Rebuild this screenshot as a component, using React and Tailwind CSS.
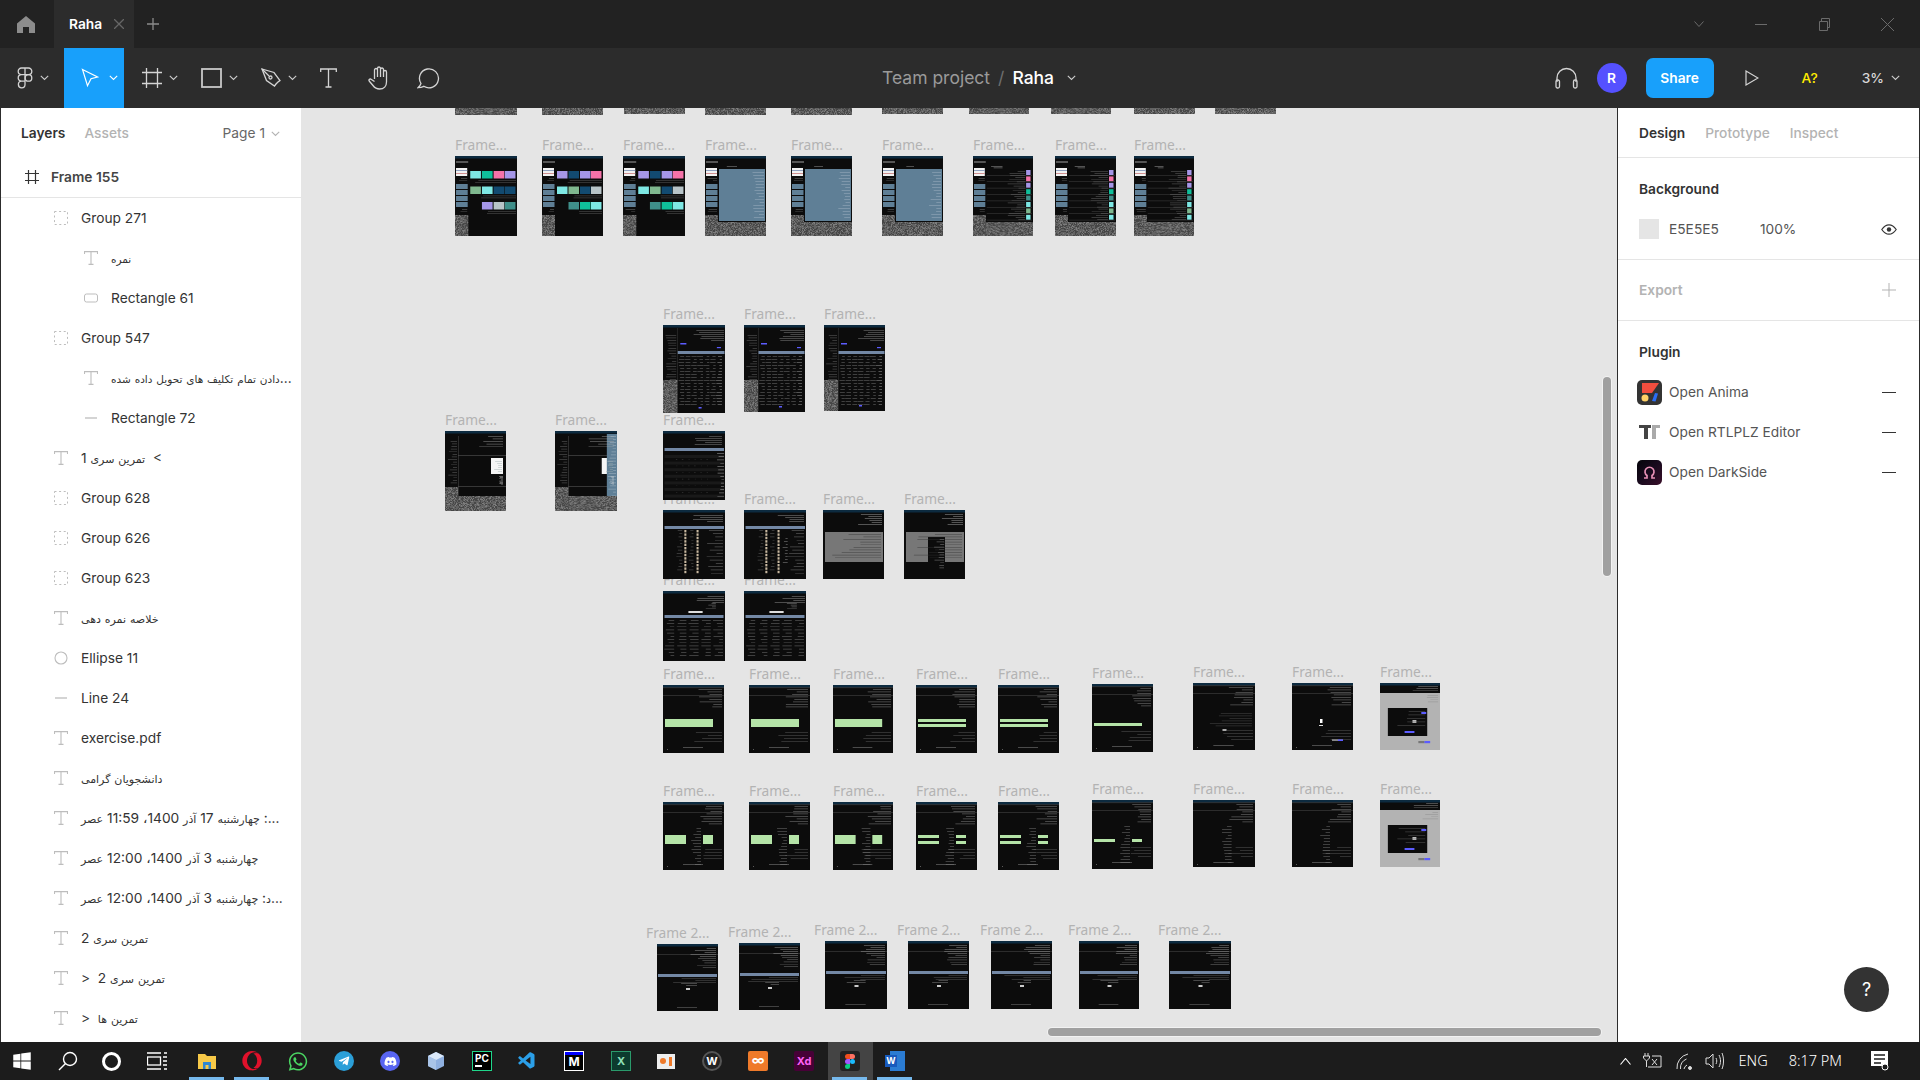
import React from 'react';
import { FaWindows, FaOpera, FaWhatsapp, FaTelegramPlane, FaDiscord } from 'react-icons/fa';
import { VscVscode } from 'react-icons/vsc';

// seeded random so the thumbnails stay the same between renders
function rng(seed) {
  let s = seed * 9301 + 49297;
  return () => {
    s = (s * 9301 + 49297) % 233280;
    return s / 233280;
  };
}

function noisePaths(x, y, w, h, seed) {
  const r = rng(seed);
  let dark = '';
  let light = '';
  for (let j = 0; j < h; j++) {
    for (let i = 0; i < w; i++) {
      const v = r();
      if (v < 0.36) dark += `M${x + i} ${y + j}h1v1h-1z`;
      else if (v > 0.85) light += `M${x + i} ${y + j}h1v1h-1z`;
    }
  }
  return [
    { d: `M${x} ${y}h${w}v${h}h-${w}z`, fill: '#636363' },
    { d: dark, fill: '#474747' },
    { d: light, fill: '#7d7d7d' },
  ];
}

// fake tiny text, right aligned
function greek(seed, right, y, maxW, rows, step, fill = '#8a8a8a') {
  const r = rng(seed);
  let d = '';
  for (let j = 0; j < rows; j++) {
    const w = maxW * (0.35 + r() * 0.65);
    d += `M${(right - w).toFixed(1)} ${(y + j * step).toFixed(1)}h${w.toFixed(1)}v0.7h-${w.toFixed(1)}z`;
  }
  return { d, fill, opacity: 0.55 };
}

const T = '#7ee8e4';
const G = '#0fbf9a';
const P = '#f572a8';
const V = '#a596e8';
const O = '#7fb88f';
const N = '#124a70';
const S = '#b8c4c8';
const M = '#3f8f8a';
const BLUE = '#5f7f96';
const BAND = '#7388a5';
const GREEN = '#b5e4a8';
const PURPLE = '#5c5cff';

const CARD_SETS = {
  cards1: [[T, G, P, V], [O, T, N, N], [null, V, S, M]],
  cards2: [[V, N, V, P], [T, O, N, S], [null, M, G, T]],
};

function sidebar(rects, paths, h, seed) {
  rects.push([1, 12, 11, 8, '#f2f2f2'], [1, 14, 11, 1, '#8fa0c0'], [1, 17, 11, 1, '#d09090']);
  [28, 34, 40, 46].forEach((y) => rects.push([1, y, 11.5, 5, BLUE]));
  paths.push(greek(seed + 1, 12, 22, 10, 2, 2.4), greek(seed + 2, 12, 53, 10, 2, 2.4));
}

function buildThumb(kind, h, seed) {
  const rects = [[0, 0, 61, h, '#0c0c0c']];
  let paths = [];

  if (kind === 'strip') {
    return { rects: [], paths: noisePaths(0, 0, 61, h, seed) };
  }

  if (CARD_SETS[kind]) {
    paths.push(...noisePaths(0, 59, 13, h - 59, seed));
    sidebar(rects, paths, h, seed);
    const xs = [15, 26.5, 38, 49];
    CARD_SETS[kind].forEach((row, j) => {
      row.forEach((c, i) => {
        if (c) rects.push([xs[i], 15 + j * 15.5, 10.5, 7.5, c]);
      });
      paths.push(greek(seed + j + 5, 60, 24 + j * 15.5, 44, 2, 2, '#6a6a6a'));
    });
    rects.push([1, 5, 12, 2, '#555']);
  } else if (kind === 'panel' || kind === 'list') {
    paths.push(...noisePaths(0, 59, 13, h - 59, seed), ...noisePaths(13, 66, 48, h - 66, seed + 3));
    sidebar(rects, paths, h, seed);
    rects.push([1, 5, 12, 2, '#555']);
    if (kind === 'panel') {
      rects.push([14, 13, 46, 52, BLUE]);
      paths.push(greek(seed + 7, 59, 16, 12, 16, 3, '#a9bccb'), greek(seed + 8, 32, 10, 12, 1, 1, '#bbb'));
    } else {
      const cols = [V, P, V, G, M, T, O, T];
      cols.forEach((c, j) => {
        rects.push([54, 14 + j * 6.4, 4.5, 5, c]);
        rects.push([14, 19 + j * 6.4, 46, 0.6, '#3a3a3a']);
      });
      paths.push(greek(seed + 9, 53, 15, 18, 24, 2.1, '#777'), greek(seed + 10, 30, 10, 12, 2, 1.5, '#bbb'));
    }
  } else if (kind === 'table') {
    paths.push(...noisePaths(0, 55, 14, h - 55, seed));
    rects.push([14, 3, 0.6, h - 4, '#333'], [14.5, 26, 46, 3, BAND], [17, 18, 6, 1.5, PURPLE], [53, 22, 4, 1.2, PURPLE], [35, h - 6, 3, 1.5, PURPLE]);
    paths.push(greek(seed + 1, 13, 10, 11, 18, 2.6, '#777'), greek(seed + 2, 60, 5, 32, 6, 2, '#999'));
    for (let j = 0; j < 7; j++) {
      paths.push(greek(seed + 10 + j, 58 - j * 6.2, 31, 6, 17, 3, j === 0 ? '#bbb' : '#888'));
    }
  } else if (kind === 'doc' || kind === 'docblue') {
    paths.push(...noisePaths(0, 56, 13, h - 56, seed), ...noisePaths(13, 65, 48, h - 65, seed + 3));
    rects.push([13, 5, 0.6, 60, '#444'], [13, 24, 48, 0.6, '#555'], [13, 55, 48, 0.6, '#555'], [46, 27, 12, 16, '#f5f5f5']);
    paths.push(greek(seed + 1, 12, 10, 10, 17, 2.6, '#777'), greek(seed + 2, 58, 5, 28, 5, 2.6, '#aaa'), greek(seed + 4, 58, 45, 4, 8, 1.2, '#ddd'), greek(seed + 5, 57, 30, 8, 6, 2, '#9aa'));
    if (kind === 'docblue') {
      rects.push([51, 3, 10, 65, BLUE]);
      paths.push(greek(seed + 6, 60, 5, 8, 20, 3.1, '#b5c5d2'));
    }
  } else if (kind === 'wide') {
    rects.push([1.5, 17, 58.5, 3, BAND]);
    for (let j = 0; j < 7; j++) rects.push([1.5, 24 + j * 6.6, 58.5, 3, '#191919']);
    paths.push(greek(seed + 1, 58, 5, 30, 5, 2, '#999'), greek(seed + 2, 60, 22, 7, 14, 3.3, '#ccc'));
    for (let j = 1; j < 7; j++) paths.push(greek(seed + 3 + j, 50 - j * 6, 28, 1.5, 6, 6.6, '#555'));
  } else if (kind === 'image' || kind === 'image2') {
    rects.push([1.5, 16, 58.5, 3, BAND]);
    for (let j = 0; j < 13; j++) {
      rects.push([21, 20 + j * 3.4, 2, 2.4, '#c8b8a0'], [33, 20 + j * 3.4, 2, 2.4, '#c8b8a0']);
    }
    paths.push(greek(seed + 1, 59, 5, 30, 4, 2, '#aaa'), greek(seed + 2, 59, 20, 16, 14, 3.3, '#888'), greek(seed + 3, 19, 20, 6, 13, 3.3, '#777'), greek(seed + 4, 30, 20, 5, 13, 3.3, '#777'));
    if (kind === 'image2') rects.push([38, 26, 5, 30, '#0c0c0c']);
    if (kind === 'image2') paths.push(greek(seed + 5, 43, 28, 5, 9, 3, '#aaa'));
  } else if (kind === 'gray' || kind === 'grayPop') {
    rects.push([2, 22, 58, 30, '#777']);
    paths.push(greek(seed + 1, 59, 4, 28, 6, 2, '#bbb'), greek(seed + 2, 58, 24, 50, 10, 2.6, '#333'));
    if (kind === 'grayPop') {
      rects.push([24, 27, 17, 33, '#0c0c0c']);
      paths.push(greek(seed + 3, 40, 29, 10, 12, 2.6, '#999'));
    }
  } else if (kind === 'summary') {
    rects.push([25, 20, 14, 2, '#ddd'], [1.5, 24, 58, 3, BAND]);
    paths.push(greek(seed + 1, 60, 5, 30, 4, 2, '#aaa'), greek(seed + 2, 52, 12, 10, 4, 1.8, '#999'));
    for (let j = 0; j < 5; j++) paths.push(greek(seed + 3 + j, 59 - j * 12, 29, 10, 12, 3.2, '#888'));
  } else if (kind.startsWith('green') || kind === 'plain' || kind === 'mic' || kind.startsWith('split') || kind === 'plainSplit') {
    const split = kind.startsWith('split') || kind === 'plainSplit';
    paths.push(greek(seed + 1, 59, 4, 24, 8, 2.5, '#999'), greek(seed + 2, 59, 47, 30, 4, 3, '#666'));
    rects.push([0, 2.5, 61, 0.6, '#444'], [0, 10, 61, 0.6, '#444'], [4, 64, 0.8, 0.8, '#888'], [20, 62, 20, 0.6, '#777']);
    if (split) paths.push(greek(seed + 3, 38, 26, 10, 13, 3, '#888'));
    const bars = {
      green1: [[2, 34, 48, 8]],
      green2: [[2, 34, 48, 3], [2, 39, 48, 3]],
      green3: [[2, 39, 48, 3]],
      split1: [[2, 33, 21, 9], [40, 33, 10, 9]],
      split2: [[2, 33, 21, 3], [2, 39, 21, 3], [40, 33, 10, 3], [40, 39, 10, 3]],
      split3: [[2, 39, 21, 3], [40, 39, 10, 3]],
    }[kind];
    (bars || []).forEach((b) => rects.push([...b, GREEN]));
    if (kind === 'mic') {
      rects.push([28, 36, 2.5, 4, '#fff'], [27, 42, 4, 1, '#ddd'], [40, 56, 6, 2, '#888'], [46, 56, 5, 2, PURPLE]);
    }
    if (kind === 'plain') {
      rects.push([29, 46, 4, 2, '#aaa']);
      paths.push(greek(seed + 4, 58, 30, 46, 6, 2.5, '#555'));
    }
  } else if (kind === 'modal') {
    rects.push([0, 10, 61, h - 10, '#b3b3b3'], [8, 25, 40, 28, '#0c0c0c'], [45, 58, 6, 2.2, PURPLE], [39, 58, 6, 2.2, '#777'], [25, 48, 10, 2, PURPLE], [42, 29, 5, 2, PURPLE], [33, 37, 4, 3, '#bbb']);
    paths.push(greek(seed + 1, 59, 3, 26, 3, 2.2, '#aaa'), greek(seed + 2, 59, 12, 16, 4, 2.2, '#888'), greek(seed + 3, 46, 28, 30, 5, 3.5, '#666'));
  } else if (kind === 'band') {
    rects.push([1, 30, 59, 3, BAND], [0, 10, 61, 0.6, '#444'], [29, 44, 4, 2, '#ccc']);
    paths.push(greek(seed + 1, 59, 4, 26, 5, 2, '#aaa'), greek(seed + 2, 59, 14, 20, 5, 2.3, '#888'), greek(seed + 3, 40, 39, 20, 2, 2, '#999'), greek(seed + 4, 59, 34, 50, 3, 2, '#666'));
    rects.push([20, 63, 20, 0.6, '#666']);
  }

  rects.splice(1, 0, [0, 0, 61, 2.5, '#0d2b40']);
  return { rects, paths };
}

function Thumb({ kind, w, h, seed }) {
  const { rects, paths } = buildThumb(kind, h, seed);
  return (
    <svg width={w} height={h} viewBox={`0 0 61 ${h}`} preserveAspectRatio="none" className="relative z-10 block">
      {rects.map((r, i) => (
        <rect key={i} x={r[0]} y={r[1]} width={r[2]} height={r[3]} fill={r[4]} />
      ))}
      {paths.map((p, i) => (
        <path key={i} d={p.d} fill={p.fill} opacity={p.opacity} />
      ))}
    </svg>
  );
}

// x, y, w, h in page pixels
const FRAMES = [
  [455, 100, 62, 15, 'strip'], [542, 100, 61, 15, 'strip'], [624, 100, 61, 14, 'strip'], [705, 100, 61, 15, 'strip'], [791, 100, 61, 15, 'strip'],
  [882, 100, 61, 14, 'strip'], [969, 100, 60, 14, 'strip'], [1051, 100, 60, 14, 'strip'], [1134, 100, 61, 14, 'strip'], [1215, 100, 61, 14, 'strip'],

  [455, 156, 62, 80, 'cards1', 'Frame...'], [542, 156, 61, 80, 'cards2', 'Frame...'], [623, 156, 62, 80, 'cards2', 'Frame...'],
  [705, 156, 61, 80, 'panel', 'Frame...'], [791, 156, 61, 80, 'panel', 'Frame...'], [882, 156, 61, 80, 'panel', 'Frame...'],
  [973, 156, 60, 80, 'list', 'Frame...'], [1055, 156, 61, 80, 'list', 'Frame...'], [1134, 156, 60, 80, 'list', 'Frame...'],

  [663, 325, 62, 88, 'table', 'Frame...'], [744, 325, 61, 87, 'table', 'Frame...'], [824, 325, 61, 86, 'table', 'Frame...'],
  [445, 431, 61, 80, 'doc', 'Frame...'], [555, 431, 62, 80, 'docblue', 'Frame...'],
  [663, 431, 62, 69, 'wide', 'Frame...'],
  [663, 510, 62, 69, 'image', 'Frame...'], [744, 510, 62, 69, 'image2', 'Frame...'], [823, 510, 61, 69, 'gray', 'Frame...'], [904, 510, 61, 69, 'grayPop', 'Frame...'],
  [663, 591, 62, 70, 'summary', 'Frame...'], [744, 591, 62, 70, 'summary', 'Frame...'],

  [663, 685, 61, 68, 'green1', 'Frame...'], [749, 685, 61, 68, 'green1', 'Frame...'], [833, 685, 60, 68, 'green1', 'Frame...'], [916, 685, 61, 68, 'green2', 'Frame...'], [998, 685, 61, 68, 'green2', 'Frame...'],
  [1092, 684, 61, 68, 'green3', 'Frame...'], [1193, 683, 62, 67, 'plain', 'Frame...'], [1292, 683, 61, 67, 'mic', 'Frame...'], [1380, 683, 60, 67, 'modal', 'Frame...'],

  [663, 802, 61, 68, 'split1', 'Frame...'], [749, 802, 61, 68, 'split1', 'Frame...'], [833, 802, 60, 68, 'split1', 'Frame...'], [916, 802, 61, 68, 'split2', 'Frame...'], [998, 802, 61, 68, 'split2', 'Frame...'],
  [1092, 800, 61, 69, 'split3', 'Frame...'], [1193, 800, 62, 67, 'plainSplit', 'Frame...'], [1292, 800, 61, 67, 'plainSplit', 'Frame...'], [1380, 800, 60, 67, 'modal', 'Frame...'],

  [657, 944, 61, 67, 'band', 'Frame 2...'], [739, 943, 61, 67, 'band', 'Frame 2...'], [825, 941, 62, 68, 'band', 'Frame 2...'], [908, 941, 61, 68, 'band', 'Frame 2...'],
  [991, 941, 61, 68, 'band', 'Frame 2...'], [1079, 941, 60, 68, 'band', 'Frame 2...'], [1169, 941, 62, 68, 'band', 'Frame 2...'],
];

function Canvas() {
  return (
    <div className="relative flex-1 overflow-hidden bg-[#e5e5e5]">
      {FRAMES.map(([x, y, w, h, kind, label], i) => (
        <div key={i} className="absolute" style={{ left: x - 301, top: y - 108, width: w }}>
          {label && (
            <span className={`absolute top-[-19px] whitespace-nowrap text-[13.75px] leading-4 text-[#b3b3b3] ${label === 'Frame 2...' ? 'left-[-11px]' : 'left-0'}`}>{label}</span>
          )}
          <Thumb kind={kind} w={w} h={h} seed={i + 3} />
        </div>
      ))}
      {/* canvas scrollbars */}
      <div className="absolute left-[1302px] top-[269px] z-20 h-[199px] w-2 rounded-full bg-[#a0a0a0] ring-1 ring-white/50" />
      <div className="absolute left-[747px] top-[920px] z-20 h-2 w-[553px] rounded-full bg-[#a0a0a0] ring-1 ring-white/50" />
    </div>
  );
}

const Chevron = ({ className = '', color = '#ccc' }) => (
  <svg width="9" height="6" viewBox="0 0 9 6" fill="none" className={className}>
    <path d="M.8.8l3.7 3.7L8.2.8" stroke={color} strokeWidth="1.1" />
  </svg>
);

const iconLine = { fill: 'none', stroke: '#d4d4d4', strokeWidth: 1.3 };

function ToolGroup({ children, chevron, className = '' }) {
  return (
    <div className={`flex items-center ${className}`}>
      {children}
      {chevron && <Chevron className="ml-[7px]" />}
    </div>
  );
}

function Toolbar() {
  return (
    <div className="flex h-[60px] items-center bg-[#2c2c2c] font-['Inter',sans-serif]">
      <div className="flex w-[64px] items-center pl-[17px]">
        <ToolGroup chevron>
          <svg width="16" height="22" viewBox="0 0 16 22" {...iconLine}>
            <path d="M8 1H4.500a3.300 3.300 0 000 6.600H8zM8 1h3.500a3.300 3.300 0 010 6.600H8zM8 7.600H4.500a3.300 3.300 0 000 6.600H8zM8 14.200H4.500A3.300 3.300 0 108 17.500z" />
            <circle cx="11.500" cy="10.900" r="3.300" />
          </svg>
        </ToolGroup>
      </div>
      <div className="flex h-full w-[60px] items-center justify-center gap-[10px] bg-[#18a0fb] pl-[10px]">
        <svg width="18" height="20" viewBox="0 0 18 20" fill="none" stroke="#fff" strokeWidth="1.200">
          <path d="M1.500 1.500l15 7.500-6.500 1.700-3.500 7z" />
        </svg>
        <Chevron color="#fff" />
      </div>
      <ToolGroup chevron className="ml-[18px]">
        <svg width="20" height="20" viewBox="0 0 20 20" {...iconLine}>
          <path d="M4.500 0v20M15.500 0v20M0 4.500h20M0 15.500h20" />
        </svg>
      </ToolGroup>
      <ToolGroup chevron className="ml-[23px]">
        <svg width="21" height="20" viewBox="0 0 21 20" fill="none" stroke="#c8c8c8" strokeWidth="1.800">
          <rect x="1" y="1" width="19" height="18" />
        </svg>
      </ToolGroup>
      <ToolGroup chevron className="ml-[23px]">
        <svg width="20" height="20" viewBox="0 0 20 20" {...iconLine}>
          <path d="M1 1l12 3.500 6 8-2 1.500-2 2-1.500 2-8-5.500z" />
          <path d="M1 1l7 7" />
          <circle cx="9.500" cy="9.500" r="1.500" />
        </svg>
      </ToolGroup>
      <svg width="17" height="20" viewBox="0 0 17 20" {...iconLine} className="ml-[23px]">
        <path d="M.7 4V1h15.600v3M8.500 1v18M5.500 19h6" />
      </svg>
      <svg width="22" height="24" viewBox="0 0 22 24" {...iconLine} className="ml-[31px]">
        <path d="M6.500 13V4a1.500 1.500 0 013 0V2.500a1.500 1.500 0 013 0V3.500a1.500 1.500 0 013 0V6a1.500 1.500 0 013 0v10c0 4-2.500 7-7 7-3.500 0-5-1.500-6.500-3.500L1.200 15c-.7-1 .3-2.500 1.800-1.800l3.500 2.300M9.500 4v7M12.500 3v8M15.500 4v7" />
      </svg>
      <svg width="23" height="22" viewBox="0 0 23 22" {...iconLine} className="ml-[27px]">
        <path d="M4 16.500a9.500 9.500 0 112.800 2.800c-1.800.9-3.700 1.300-5.800 1.400 1.400-1.200 2.500-2.600 3-4.200z" />
      </svg>

      <div className="ml-[442px] flex items-center text-[17.500px]">
        <span className="text-[#9a9a9a]">Team project</span>
        <span className="mx-[8px] text-[#6f6f6f]">/</span>
        <span className="font-medium text-white">Raha</span>
        <Chevron className="ml-[13px]" />
      </div>

      <div className="ml-auto flex items-center pr-[20px]">
        <svg width="23" height="22" viewBox="0 0 23 22" {...iconLine}>
          <path d="M2 15V11a9.500 9.500 0 0119 0v4" />
          <rect x="1" y="13" width="3.500" height="8" rx="1.500" />
          <rect x="18.500" y="13" width="3.500" height="8" rx="1.500" />
        </svg>
        <div className="ml-[19px] flex size-[30px] items-center justify-center rounded-full bg-[#5551ff] text-[13.750px] font-semibold text-white">R</div>
        <div className="ml-[19px] flex h-[40px] w-[68px] items-center justify-center rounded-[7px] bg-[#18a0fb] text-[13.750px] font-semibold text-white">Share</div>
        <svg width="14" height="16" viewBox="0 0 14 16" fill="none" stroke="#d4d4d4" strokeWidth="1.200" className="ml-[31px]">
          <path d="M1 1l12 7-12 7z" />
        </svg>
        <span className="ml-[43px] text-[13.750px] font-medium text-[#ffeb00]">A?</span>
        <span className="ml-[44px] text-[13.750px] font-medium text-[#d8d8d8]">3%</span>
        <Chevron className="ml-[7px]" />
      </div>
    </div>
  );
}

function TitleBar() {
  return (
    <div className="flex h-12 items-center bg-[#222222] font-['Inter',sans-serif]">
      <svg width="18" height="17" viewBox="0 0 18 17" fill="#8c8c8c" className="ml-[17px]">
        <path d="M9 0l9 7.500V17h-6v-6H6v6H0V7.500z" />
      </svg>
      <div className="ml-[19px] flex h-full w-[80px] items-center bg-[#2c2c2c] pl-[15px]">
        <span className="text-[13.750px] font-semibold text-white">Raha</span>
        <svg width="10" height="10" viewBox="0 0 10 10" stroke="#666" strokeWidth="1.300" className="ml-[12px]">
          <path d="M0 0l10 10M10 0L0 10" />
        </svg>
      </div>
      <svg width="12" height="12" viewBox="0 0 12 12" stroke="#8c8c8c" strokeWidth="1.300" className="ml-[13px]">
        <path d="M6 0v12M0 6h12" />
      </svg>
      <div className="ml-auto flex items-center text-[#6b6b6b]">
        <svg width="10" height="6" viewBox="0 0 10 6" fill="none" stroke="currentColor" className="mr-[51px]">
          <path d="M.5.500L5 5.500 9.500.500" />
        </svg>
        <div className="mr-[52px] h-px w-[12px] bg-current" />
        <svg width="11" height="13" viewBox="0 0 11 13" fill="none" stroke="currentColor" className="mr-[51px]">
          <path d="M.5 3.500h8v9h-8zM2.500 3.500v-3h8v9h-2" />
        </svg>
        <svg width="13" height="13" viewBox="0 0 13 13" stroke="currentColor" className="mr-[26px]">
          <path d="M0 0l13 13M13 0L0 13" />
        </svg>
      </div>
    </div>
  );
}

const LAYERS = [
  ['group', 'Group 271', 0],
  ['text', 'نمره', 1],
  ['rect', 'Rectangle 61', 1],
  ['group', 'Group 547', 0],
  ['text', 'دادن تمام تکلیف های تحویل داده شده...', 1],
  ['line', 'Rectangle 72', 1],
  ['text', 'تمرین سری 1  <', 0],
  ['group', 'Group 628', 0],
  ['group', 'Group 626', 0],
  ['group', 'Group 623', 0],
  ['text', 'خلاصه نمره دهی', 0],
  ['ellipse', 'Ellipse 11', 0],
  ['line', 'Line 24', 0],
  ['text', 'exercise.pdf', 0],
  ['text', 'دانشجویان گرامی', 0],
  ['text', 'چهارشنبه 17 آذر 1400، 11:59 عصر\u200E :...', 0],
  ['text', 'چهارشنبه 3 آذر 1400، 12:00 عصر', 0],
  ['text', 'چهارشنبه 3 آذر 1400، 12:00 عصر\u200E :\u200Eد...', 0],
  ['text', 'تمرین سری 2', 0],
  ['text', '>  تمرین سری 2', 0],
  ['text', '>  تمرین ها', 0],
];

function LayerIcon({ type }) {
  if (type === 'group') {
    return (
      <svg width="14" height="14" viewBox="0 0 14 14" stroke="#bdbdbd" fill="none" strokeDasharray="2 2.600">
        <rect x=".5" y=".5" width="13" height="13" />
      </svg>
    );
  }
  if (type === 'text') {
    return (
      <svg width="14" height="14" viewBox="0 0 14 14" stroke="#bdbdbd" fill="none" strokeWidth="1.100">
        <path d="M.5 3V.6h13V3M7 .6v12.800M4.500 13.400h5" />
      </svg>
    );
  }
  if (type === 'rect') {
    return (
      <svg width="14" height="14" viewBox="0 0 14 14" stroke="#bdbdbd" fill="none">
        <rect x=".5" y="3" width="13" height="8" rx="2" />
      </svg>
    );
  }
  if (type === 'line') {
    return (
      <svg width="14" height="14" viewBox="0 0 14 14" stroke="#bdbdbd" fill="none" strokeWidth="1.300">
        <path d="M1 7h12" />
      </svg>
    );
  }
  return (
    <svg width="14" height="14" viewBox="0 0 14 14" stroke="#bdbdbd" fill="none" strokeWidth="1.100">
      <circle cx="7" cy="7" r="6" />
    </svg>
  );
}

// the arabic words render smaller than the latin/digits in the reference
function LayerName({ name, indent }) {
  const parts = name.split(/([\u0621-\u06FF]+)/);
  return (
    <>
      {parts.map((p, i) => (/[\u0621-\u06FF]/.test(p) ? <span key={i} className={indent ? 'text-[10.500px]' : 'text-[11px]'}>{p}</span> : <span key={i}>{p}</span>))}
    </>
  );
}

function LeftPanel() {
  return (
    <div className="flex w-[301px] flex-col overflow-hidden border-l border-[#2c2c2c] bg-white font-['Inter','DejaVu_Sans',sans-serif] text-[13.750px]">
      <div className="flex h-[49px] shrink-0 items-center pl-[20px] pr-[21px] pt-[2px]">
        <span className="font-semibold text-[#333]">Layers</span>
        <span className="ml-[19px] font-medium text-[#b3b3b3]">Assets</span>
        <span className="ml-auto text-[#666]">Page 1</span>
        <Chevron className="ml-[6px]" color="#b3b3b3" />
      </div>
      <div className="flex h-[41px] shrink-0 items-center border-b border-[#e5e5e5] pl-[24px]">
        <svg width="14" height="14" viewBox="0 0 14 14" stroke="#333" fill="none" strokeWidth="1.200">
          <path d="M3.500 0v14M10.500 0v14M0 3.500h14M0 10.500h14" />
        </svg>
        <span className="ml-[12px] font-semibold text-[#444]">Frame 155</span>
      </div>
      {LAYERS.map(([type, name, indent], i) => (
        <div key={i} className={`flex h-10 shrink-0 items-center text-[#333] ${indent ? 'pl-[83px]' : 'pl-[53px]'}`}>
          <LayerIcon type={type} />
          <span className="ml-[13px] whitespace-pre">
            <LayerName name={name} indent={indent} />
          </span>
        </div>
      ))}
    </div>
  );
}

const Minus = () => <div className="ml-auto h-px w-[14px] bg-[#333]" />;

function PluginIcon({ children, className }) {
  return <div className={`flex size-[25px] shrink-0 items-center justify-center overflow-hidden rounded-[5px] ${className}`}>{children}</div>;
}

function RightPanel() {
  return (
    <div className="relative flex w-[303px] flex-col border-x border-[#2c2c2c] bg-white font-['Inter',sans-serif] text-[13.750px]">
      <div className="flex h-[50px] shrink-0 items-center gap-[20px] border-b border-[#e5e5e5] pl-[21px] pt-[2px]">
        <span className="font-semibold text-[#333]">Design</span>
        <span className="font-medium text-[#b3b3b3]">Prototype</span>
        <span className="font-medium text-[#b3b3b3]">Inspect</span>
      </div>
      <div className="h-[102px] shrink-0 border-b border-[#e5e5e5] pl-[21px] pr-[22px]">
        <div className="pt-[21px] font-semibold leading-[20px] text-[#333]">Background</div>
        <div className="mt-[20px] flex items-center">
          <div className="size-[20px] bg-[#e5e5e5]" />
          <span className="ml-[10px] text-[#555]">E5E5E5</span>
          <span className="ml-[41px] text-[#555]">100%</span>
          <svg width="16" height="11" viewBox="0 0 16 11" className="ml-auto" fill="none" stroke="#333" strokeWidth="1.200">
            <path d="M.8 5.500C3 2.300 5.300.8 8 .8s5 1.500 7.200 4.700C13 8.700 10.700 10.200 8 10.200S3 8.700.8 5.500z" />
            <circle cx="8" cy="5.500" r="2.200" fill="#333" stroke="none" />
          </svg>
        </div>
      </div>
      <div className="flex h-[61px] shrink-0 items-center border-b border-[#e5e5e5] pl-[21px] pr-[23px]">
        <span className="font-semibold text-[#b3b3b3]">Export</span>
        <svg width="14" height="14" viewBox="0 0 14 14" stroke="#b3b3b3" className="ml-auto">
          <path d="M7 0v14M0 7h14" />
        </svg>
      </div>
      <div className="pl-[19px] pr-[23px]">
        <div className="pl-[2px] pt-[21px] font-semibold leading-[20px] text-[#333]">Plugin</div>
        <div className="mt-[10px] flex h-10 items-center">
          <PluginIcon className="bg-[#333]">
            <svg width="25" height="25" viewBox="0 0 25 25">
              <path d="M5 3h17l-7 10H5z" fill="#f24e3e" />
              <circle cx="8" cy="18" r="3.500" fill="#ffd166" />
              <path d="M15 21l3-8 3 .5-2.500 8z" fill="#2a6df4" />
            </svg>
          </PluginIcon>
          <span className="ml-[7px] text-[#555]">Open Anima</span>
          <Minus />
        </div>
        <div className="flex h-10 items-center">
          <PluginIcon className="bg-transparent">
            <svg width="22" height="14" viewBox="0 0 22 14">
              <path d="M0 0h12v3H9v11H5V3H0z" fill="#444" />
              <path d="M13 0h8v3h-4v11h-4z" fill="#aaa" />
            </svg>
          </PluginIcon>
          <span className="ml-[7px] text-[#555]">Open RTLPLZ Editor</span>
          <Minus />
        </div>
        <div className="flex h-10 items-center">
          <PluginIcon className="bg-gradient-to-br from-[#05050a] via-[#190a1e] to-[#3a0f2a]">
            <svg width="13" height="13" viewBox="0 0 13 13" fill="none" stroke="#e58fb4" strokeWidth="1.700">
              <path d="M1 12h3V9.500a4.500 4.500 0 115 0V12h3" />
            </svg>
          </PluginIcon>
          <span className="ml-[7px] text-[#555]">Open DarkSide</span>
          <Minus />
        </div>
      </div>
      <div className="absolute left-[226px] top-[859px] flex size-[45px] items-center justify-center rounded-full bg-[#333] text-[18px] text-white">?</div>
    </div>
  );
}

// simple square app tile for the taskbar
function Tile({ className, children }) {
  return <div className={`flex size-[20px] items-center justify-center ${className}`}>{children}</div>;
}

const TASK_ITEMS = [
  { x: 197, active: true, node: (
    <svg width="20" height="20" viewBox="0 0 20 20"><path d="M1 3h7l2 2h9v13H1z" fill="#f7c948" /><rect x="6" y="11" width="8" height="7" fill="#2f86d1" /><rect x="8.500" y="14" width="3" height="4" fill="#f7c948" /></svg>
  ) },
  { x: 242, active: true, node: <FaOpera size={20} color="#e0112b" /> },
  { x: 288, node: <FaWhatsapp size={21} color="#4ad462" /> },
  { x: 334, node: <div className="flex size-[20px] items-center justify-center rounded-full bg-[#2b9fd8]"><FaTelegramPlane size={12} color="#fff" /></div> },
  { x: 380, node: <div className="flex size-[20px] items-center justify-center rounded-full bg-[#5865f2]"><FaDiscord size={13} color="#fff" /></div> },
  { x: 426, node: (
    <svg width="20" height="20" viewBox="0 0 20 20"><path d="M10 1l8 4v10l-8 4-8-4V5z" fill="#8fb0e0" /><path d="M10 1l8 4-8 4-8-4z" fill="#dbe8f8" /><path d="M10 9v10l-8-4V5z" fill="#a9c4e8" /></svg>
  ) },
  { x: 472, node: (
    <div className="relative flex size-[20px] flex-col items-start border border-[#1fd68a] bg-black pl-[2px] pt-[1px] text-[10px] font-bold leading-[11px] text-white">PC<span className="mt-[1px] h-[1.500px] w-[7px] bg-white" /></div>
  ) },
  { x: 517, node: <VscVscode size={20} color="#2b9fe8" /> },
  { x: 564, node: (
    <div className="flex h-[20px] w-[20px] flex-col border border-white bg-black"><span className="h-[3px] bg-[#0000ff]" /><span className="text-center text-[12px] font-bold leading-[14px] text-white">M</span></div>
  ) },
  { x: 611, node: <Tile className="border border-[#2a9a6b] bg-[#0c3b2e] text-[11px] font-bold text-[#8fe0b8]">X</Tile> },
  { x: 656, node: (
    <svg width="20" height="20" viewBox="0 0 20 20"><path d="M1 3h18v15H1z" fill="#eee" /><circle cx="7" cy="10" r="3" fill="#ef7a2a" /><rect x="13" y="6" width="3" height="9" fill="#ef7a2a" /></svg>
  ) },
  { x: 702, node: <div className="flex size-[20px] items-center justify-center rounded-full border-2 border-[#555] bg-[#222] text-[11px] font-bold text-white">W</div> },
  { x: 748, node: <Tile className="rounded-[2px] bg-[#ef7a2a] text-[13px] font-bold text-white">&#8734;</Tile> },
  { x: 794, node: <Tile className="rounded-[2px] bg-[#470137] text-[11px] font-bold text-[#ff61f6]">Xd</Tile> },
  { x: 840, active: true, figma: true, node: (
    <div className="flex size-[20px] items-center justify-center rounded-[3px] bg-[#222]">
      <svg width="10" height="15" viewBox="0 0 10 15"><path d="M5 0H2.500a2.500 2.500 0 000 5H5z" fill="#f24e1e" /><path d="M5 0h2.500a2.500 2.500 0 010 5H5z" fill="#ff7262" /><path d="M5 5H2.500a2.500 2.500 0 000 5H5z" fill="#a259ff" /><circle cx="7.500" cy="7.500" r="2.500" fill="#1abcfe" /><path d="M5 10H2.500A2.500 2.500 0 105 12.500z" fill="#0acf83" /></svg>
    </div>
  ) },
  { x: 885, active: true, node: (
    <div className="relative size-[20px]"><div className="absolute right-0 top-0 h-full w-[15px] bg-[#2b7cd3]" /><div className="absolute left-0 top-[4px] flex h-[12px] w-[12px] items-center justify-center bg-[#185abd] text-[9px] font-bold text-white">W</div></div>
  ) },
];

function Taskbar() {
  return (
    <div className="relative flex h-[38px] shrink-0 items-center bg-[#1c1c1c] font-['Inter',sans-serif] text-white">
      <FaWindows size={20} color="#fff" className="ml-[12px]" />
      <svg width="20" height="20" viewBox="0 0 20 20" fill="none" stroke="#fff" strokeWidth="1.400" className="ml-[26px]">
        <circle cx="12" cy="8" r="6.500" /><path d="M7.500 12.500L1 19" />
      </svg>
      <div className="ml-[24px] size-[19px] rounded-full border-[3px] border-white" />
      <svg width="20" height="20" viewBox="0 0 20 20" fill="none" stroke="#fff" strokeWidth="1.300" className="ml-[26px]">
        <path d="M0 2h14M17 2h3M0 18h14M17 18h3" /><rect x=".5" y="6" width="13" height="8" /><path d="M16 6h4M16 10h4M16 14h4" />
      </svg>
      {TASK_ITEMS.map((item) => (
        <div key={item.x} className="absolute top-0 h-full" style={{ left: item.x }}>
          {item.figma && <div className="absolute left-[-12px] top-0 h-full w-[45px] bg-[#444]" />}
          {item.active && <div className="absolute bottom-0 left-[-8px] h-[3px] w-[35px] bg-[#76b9ed]" />}
          <div className="relative mt-[9px] flex size-[20px] items-center justify-center">{item.node}</div>
        </div>
      ))}
      <div className="ml-auto flex items-center pr-[30px] text-[14.500px]">
        <svg width="11" height="7" viewBox="0 0 11 7" fill="none" stroke="#fff" strokeWidth="1.100">
          <path d="M.5 6.500l5-6 5 6" />
        </svg>
        <svg width="20" height="16" viewBox="0 0 20 16" fill="none" stroke="#ddd" className="ml-[11px]">
          <path d="M3 0v3M6 0v3M1.500 3h6v2l-3 3-3-3zM4.500 8v6M6 14h13V3h-9" /><path d="M10 6l5 6M15 6l-5 6" />
        </svg>
        <svg width="17" height="17" viewBox="0 0 17 17" fill="none" stroke="#ddd" className="ml-[14px]">
          <path d="M1 16A14 14 0 0112 1M4.500 16a10 10 0 016-10M8 16a6 6 0 013-4" /><circle cx="14" cy="15" r="1.500" fill="#ddd" />
        </svg>
        <svg width="19" height="18" viewBox="0 0 19 18" fill="none" stroke="#ddd" className="ml-[12px]">
          <path d="M1 6h3l4-4v14l-4-4H1zM11 6c1 2 1 4 0 6M14 3c2 4 2 8 0 12M17 1c2 5 2 11 0 16" />
        </svg>
        <span className="ml-[15px] font-['Noto_Sans',sans-serif] font-light">ENG</span>
        <span className="ml-[21px] font-['Noto_Sans',sans-serif] font-light">8:17 PM</span>
        <svg width="20" height="20" viewBox="0 0 20 20" className="ml-[28px]">
          <path d="M1 0h17v15H1z" fill="#fff" />
          <path d="M4 4h11M4 8h11M4 12h7" stroke="#1c1c1c" strokeWidth="1.300" />
          <circle cx="15" cy="16" r="3" fill="#1c1c1c" stroke="#fff" />
        </svg>
      </div>
    </div>
  );
}

export default function App() {
  return (
    <div className="flex h-[1080px] w-[1920px] flex-col overflow-hidden bg-[#222]">
      <TitleBar />
      <Toolbar />
      <div className="flex min-h-0 flex-1">
        <LeftPanel />
        <Canvas />
        <RightPanel />
      </div>
      <Taskbar />
    </div>
  );
}
